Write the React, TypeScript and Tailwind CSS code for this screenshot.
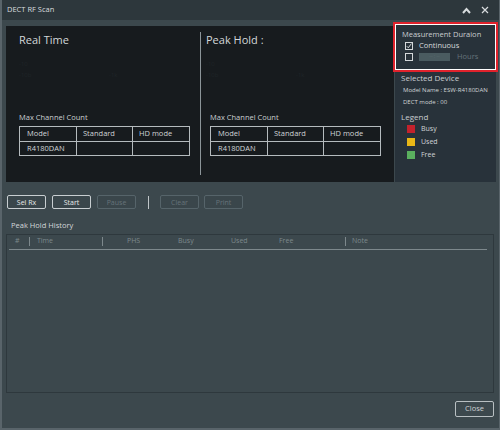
import { FC } from 'react';

const font = { fontFamily: '"Open Sans", "Noto Sans", sans-serif' };

const ChannelTable: FC = () => (
  <table className="w-[171px] border-collapse text-[7.5px] text-[#d0d4d6] table-fixed">
    <tbody>
      <tr className="h-[15px]">
        <td className="w-[57px] border border-[#b5bbbe] pl-[7px] leading-none">Model</td>
        <td className="w-[56px] border border-[#b5bbbe] pl-[6px] leading-none">Standard</td>
        <td className="border border-[#b5bbbe] pl-[6px] leading-none">HD mode</td>
      </tr>
      <tr className="h-[14px]">
        <td className="border border-[#b5bbbe] pl-[7px] leading-none">R4180DAN</td>
        <td className="border border-[#b5bbbe]"></td>
        <td className="border border-[#b5bbbe]"></td>
      </tr>
    </tbody>
  </table>
);

const GraphHalf: FC<{ title: string; tableInset?: boolean }> = ({ title, tableInset }) => (
  <div className="flex flex-col h-full">
    <div className="text-[11px] leading-none text-[#d3d7d9] pt-[8px]">{title}</div>
    <div className="mt-[16px] text-[6px] leading-none text-[#1f2528]">-10</div>
    <div className="mt-[5px] flex text-[6px] leading-none text-[#1f2528]">
      <span className="w-[90px]">-10b</span>
      <span>-1k</span>
    </div>
    <div className={`mt-auto mb-[26px] ${tableInset ? 'pl-[4px]' : ''}`}>
      <div className="text-[7.5px] leading-none text-[#c9ced0] mb-[5px]">Max Channel Count</div>
      <ChannelTable />
    </div>
  </div>
);

const Btn: FC<{ label: string; disabled?: boolean; className?: string }> = ({ label, disabled, className = '' }) => (
  <button
    className={`block w-[39px] h-[14px] rounded-[2px] border text-[7px] leading-none bg-[#3a464b] ${
      disabled ? 'border-[#56646a] text-[#66737a]' : 'border-[#c8ced1] text-[#e6e9ea]'
    } ${className}`}
  >
    {label}
  </button>
);

const Swatch: FC<{ color: string; label: string }> = ({ color, label }) => (
  <div className="flex items-center h-[13px] pl-[6px]">
    <div className={`w-[8px] h-[8px] ${color}`} />
    <span className="ml-[6px] text-[7px] leading-none text-[#d0d4d6]">{label}</span>
  </div>
);

const App: FC = () => {
  return (
    <div style={font} className="w-[500px] h-[430px] bg-[#3c484d] border-l-2 border-r border-b-2 border-[#59646a] flex flex-col overflow-hidden">
      {/* title bar */}
      <div className="h-[20px] bg-[#2d373c] flex items-center pl-[5px] pr-[10px] shrink-0">
        <span className="text-[7.5px] text-[#d8dcde]">DECT RF Scan</span>
        <div className="ml-auto flex items-center gap-[10px] text-[#d8dcde]">
          <svg width="9" height="7" viewBox="0 0 9 7"><path d="M1 6 L4.5 2 L8 6" stroke="currentColor" strokeWidth="2" fill="none" /></svg>
          <svg width="8" height="8" viewBox="0 0 8 8"><path d="M1 1 L7 7 M7 1 L1 7" stroke="currentColor" strokeWidth="1.2" /></svg>
        </div>
      </div>

      {/* top area */}
      <div className="flex items-start pl-[4px] pt-[4px] shrink-0">
        <div className="mt-[2px] w-[388px] h-[156px] bg-[#171b1e] flex items-stretch">
          <div className="w-[194px] pl-[13px]">
            <GraphHalf title="Real Time" />
          </div>
          <div className="w-px bg-[#8c9599] mt-[6px] mb-[7px]" />
          <div className="flex-1 pl-[5px]">
            <GraphHalf title="Peak Hold :" tableInset />
          </div>
        </div>

        <div className="ml-[1px] w-[101px] h-[158px] bg-[#28323a] flex flex-col">
          <div className="h-[46px] border border-white ring-2 ring-[#e0222c] px-[6px] pt-[6px]">
            <div className="text-[7.5px] leading-none text-[#c8cdd0]">Measurement Duraion</div>
            <div className="flex items-center mt-[3px] pl-[3px]">
              <div className="w-[8px] h-[8px] border border-[#d5d9db] flex items-center justify-center">
                <svg width="6" height="6" viewBox="0 0 6 6"><path d="M0.8 3.2 L2.3 4.8 L5.4 0.6" stroke="#e2e5e6" strokeWidth="0.9" fill="none" /></svg>
              </div>
              <span className="ml-[6px] text-[7.5px] leading-none text-[#d6dadc]">Continuous</span>
            </div>
            <div className="flex items-center mt-[3px] pl-[3px]">
              <div className="w-[8px] h-[8px] border border-[#d5d9db]" />
              <div className="ml-[6px] w-[31px] h-[8px] bg-[#4a5b60] flex items-center justify-center text-[5px] text-[#5b6c71]">-- : --</div>
              <span className="ml-[7px] text-[7.5px] leading-none text-[#66737a]">Hours</span>
            </div>
          </div>
          <div className="px-[6px] pt-[4px]">
            <div className="text-[8px] leading-none text-[#c8cdd0]">Selected Device</div>
            <div className="mt-[5px] pl-[2px] text-[6px] leading-none text-[#d0d4d6] whitespace-nowrap">Model Name : ESW-R4180DAN</div>
            <div className="mt-[6px] pl-[2px] text-[6px] leading-none text-[#d0d4d6] whitespace-nowrap">DECT mode : 00</div>
            <div className="mt-[8px] text-[8px] leading-none text-[#c8cdd0]">Legend</div>
            <div className="mt-[1px] flex flex-col">
              <Swatch color="bg-[#c3222c]" label="Busy" />
              <Swatch color="bg-[#e9b716]" label="Used" />
              <Swatch color="bg-[#5aaf5e]" label="Free" />
            </div>
          </div>
        </div>
      </div>

      {/* buttons */}
      <div className="flex items-center pl-[5px] mt-[13px] h-[14px] shrink-0">
        <Btn label="Sel Rx" />
        <Btn label="Start" className="ml-[6px]" />
        <Btn label="Pause" disabled className="ml-[6px]" />
        <div className="ml-[12px] w-px h-[13px] bg-[#c0c6c9]" />
        <Btn label="Clear" disabled className="ml-[11px]" />
        <Btn label="Print" disabled className="ml-[5px]" />
      </div>

      <div className="pl-[9px] mt-[13px] text-[7.5px] leading-none text-[#d3d7d9] shrink-0">Peak Hold History</div>

      {/* history table */}
      <div className="ml-[4px] mt-[4px] w-[488px] h-[159px] border border-[#2e383d] shrink-0 pl-[2px]">
        <div className="flex items-center h-[15px] w-[478px] border-b border-[#7d888c] text-[7px] text-[#7d888c]">
          <span className="pl-[6px] w-[20px]">#</span>
          <div className="w-px h-[9px] bg-[#7d888c]" />
          <span className="pl-[7px] w-[72px]">Time</span>
          <div className="w-px h-[9px] bg-[#7d888c]" />
          <span className="w-[50px] pl-[24px]">PHS</span>
          <span className="w-[52px] pl-[25px]">Busy</span>
          <span className="w-[50px] pl-[26px]">Used</span>
          <span className="w-[90px] pl-[24px]">Free</span>
          <div className="w-px h-[9px] bg-[#7d888c]" />
          <span className="pl-[6px]">Note</span>
        </div>
      </div>

      <div className="flex justify-end pr-[5px] mt-[8px] shrink-0">
        <button className="w-[39px] h-[16px] rounded-[2px] border border-[#b8bfc2] text-[7.5px] leading-none text-[#cdd1d3] bg-[#3c484d]">
          Close
        </button>
      </div>
    </div>
  );
};

export default App;
